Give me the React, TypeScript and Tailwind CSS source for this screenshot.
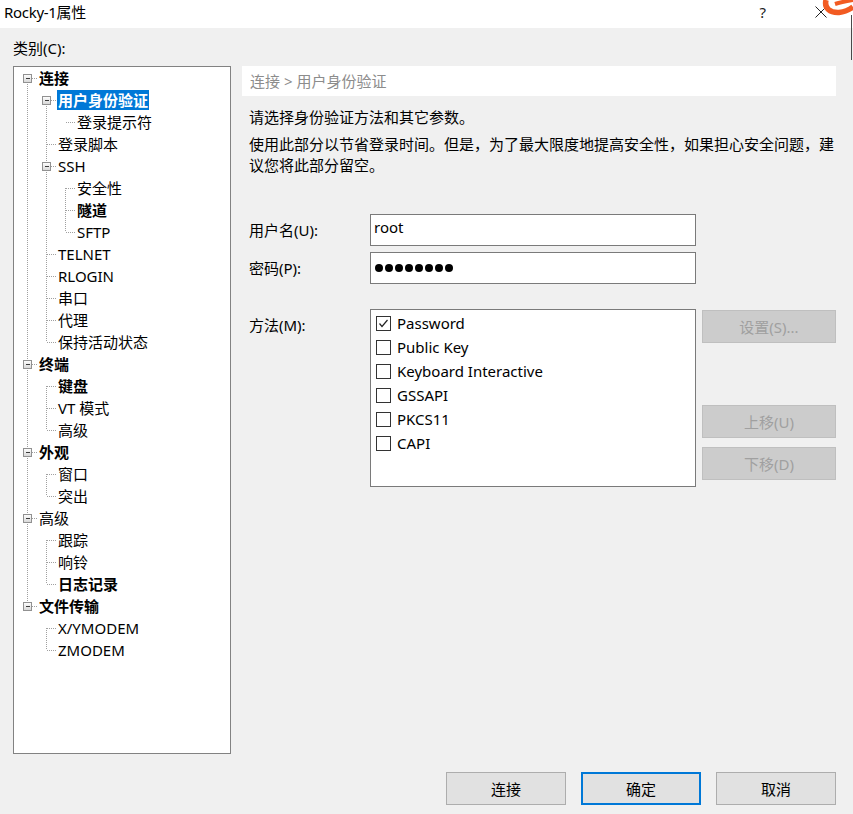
import React from "react";

type Node = { label: string; level: number; bold?: boolean; exp?: boolean; selected?: boolean };

const treeData: Node[] = [
  { label: "连接", level: 0, bold: true, exp: true },
  { label: "用户身份验证", level: 1, bold: true, exp: true, selected: true },
  { label: "登录提示符", level: 2 },
  { label: "登录脚本", level: 1 },
  { label: "SSH", level: 1, exp: true },
  { label: "安全性", level: 2 },
  { label: "隧道", level: 2, bold: true },
  { label: "SFTP", level: 2 },
  { label: "TELNET", level: 1 },
  { label: "RLOGIN", level: 1 },
  { label: "串口", level: 1 },
  { label: "代理", level: 1 },
  { label: "保持活动状态", level: 1 },
  { label: "终端", level: 0, bold: true, exp: true },
  { label: "键盘", level: 1, bold: true },
  { label: "VT 模式", level: 1 },
  { label: "高级", level: 1 },
  { label: "外观", level: 0, bold: true, exp: true },
  { label: "窗口", level: 1 },
  { label: "突出", level: 1 },
  { label: "高级", level: 0, exp: true },
  { label: "跟踪", level: 1 },
  { label: "响铃", level: 1 },
  { label: "日志记录", level: 1, bold: true },
  { label: "文件传输", level: 0, bold: true, exp: true },
  { label: "X/YMODEM", level: 1 },
  { label: "ZMODEM", level: 1 },
];

const indentClass: Record<number, string> = {
  0: "pl-[25px]",
  1: "pl-[44px]",
  2: "pl-[63px]",
};

const ROW = 22;

// dotted connector lines + expander boxes
function TreeLines() {
  const col = (l: number) => 13 + 19 * l;
  const lines: React.ReactNode[] = [];
  treeData.forEach((n, i) => {
    const cy = i * ROW + 11;
    const x = col(n.level);
    // vertical to next sibling
    for (let j = i + 1; j < treeData.length; j++) {
      if (treeData[j].level < n.level) break;
      if (treeData[j].level === n.level) {
        lines.push(
          <line key={"v" + i} x1={x + 0.5} y1={cy} x2={x + 0.5} y2={j * ROW + 11} stroke="#a0a0a0" strokeDasharray="1 1" />
        );
        break;
      }
    }
    lines.push(
      <line key={"h" + i} x1={n.exp ? x + 5 : x + 1} y1={cy + 0.5} x2={x + 10} y2={cy + 0.5} stroke="#a0a0a0" strokeDasharray="1 1" />
    );
    if (n.exp) {
      lines.push(
        <g key={"b" + i}>
          <rect x={x - 3.5} y={cy - 3.5} width={8} height={8} fill="url(#expg)" stroke="#919191" />
          <line x1={x - 1} y1={cy + 0.5} x2={x + 3} y2={cy + 0.5} stroke="#3c3c3c" />
        </g>
      );
    }
  });
  return (
    <svg className="absolute left-0 top-0 pointer-events-none" width={216} height={treeData.length * ROW}>
      <defs>
        <linearGradient id="expg" x1="0" y1="0" x2="0" y2="1">
          <stop offset="0" stopColor="#ffffff" />
          <stop offset="1" stopColor="#d6d6d6" />
        </linearGradient>
      </defs>
      {lines}
    </svg>
  );
}

function Checkbox({ checked }: { checked?: boolean }) {
  return (
    <div className="w-[15px] h-[15px] border border-[#333333] bg-white flex items-center justify-center">
      {checked && (
        <svg width="11" height="11" viewBox="0 0 11 11">
          <polyline points="1.5,5.5 4,8.5 9.5,2" fill="none" stroke="#222" strokeWidth="1.2" />
        </svg>
      )}
    </div>
  );
}

const methods = [
  { name: "Password", checked: true },
  { name: "Public Key" },
  { name: "Keyboard Interactive" },
  { name: "GSSAPI" },
  { name: "PKCS11" },
  { name: "CAPI" },
];

export default function App() {
  return (
    <div className="relative w-[853px] h-[814px] bg-[#f0f0f0] flex flex-col text-[15px] text-black font-['Noto_Sans','Noto_Sans_CJK_SC',sans-serif] overflow-hidden">
      {/* title bar */}
      <div className="h-[28px] bg-white flex items-center pl-[4px] pb-[5px]">
        <span className="leading-[20px] tracking-[-0.3px]">Rocky-1属性</span>
        <span className="ml-auto mr-[49px] leading-[20px] text-[#222]">?</span>
        <svg width="12" height="12" viewBox="0 0 12 12" className="mr-[26px]">
          <path d="M0.5 0.5 L11.5 11.5 M11.5 0.5 L0.5 11.5" stroke="#222" strokeWidth="1" />
        </svg>
      </div>
      {/* logo fragment in corner */}
      <svg className="absolute right-0 top-0" width="34" height="60" viewBox="0 0 34 60">
        <path d="M7 0 C5 8 11 13 20 12.5 C25 12 30 10 34 7" fill="none" stroke="#f25b22" strokeWidth="5.5" />
        <path d="M16 4 C22 2 28 1 34 0" fill="none" stroke="#f25b22" strokeWidth="4" />
        <line x1="32.5" y1="15" x2="32.5" y2="60" stroke="#4a4a4a" strokeWidth="1" />
      </svg>

      <div className="flex items-start pl-[13px]">
        <div className="flex flex-col pt-[10px] w-[218px]">
          <div className="leading-[20px]">类别(C):</div>
          <div className="mt-[8px] h-[688px] border border-[#828282] bg-white relative">
            <TreeLines />
            <div className="flex flex-col">
              {treeData.map((n, i) => (
                <div key={i} className={`h-[22px] flex items-center leading-[20px] ${indentClass[n.level]}`}>
                  {n.selected ? (
                    <span className="bg-[#0078d7] text-white font-bold px-[1px] -ml-[1px]">{n.label}</span>
                  ) : (
                    <span className={n.bold ? "font-bold" : ""}>{n.label}</span>
                  )}
                </div>
              ))}
            </div>
          </div>
        </div>

        <div className="ml-[11px] mt-[38px] w-[594px] flex flex-col">
          <div className="h-[30px] bg-white flex items-center pl-[8px] text-[#8c8c8c] leading-[20px]">
            连接 &gt; 用户身份验证
          </div>
          <div className="pl-[7px] mt-[11px] leading-[21px]">请选择身份验证方法和其它参数。</div>
          <div className="pl-[7px] mt-[6px] leading-[21px]">
            使用此部分以节省登录时间。但是，为了最大限度地提高安全性，如果担心安全问题，建议您将此部分留空。
          </div>

          <div className="pl-[7px] mt-[38px] flex flex-col gap-[6px]">
            <div className="flex items-center">
              <div className="w-[121px] leading-[20px]">用户名(U):</div>
              <div className="w-[326px] h-[32px] border border-[#7a7a7a] bg-white flex items-start pl-[3px] pt-[2px] leading-[20px]">
                root
              </div>
            </div>
            <div className="flex items-center">
              <div className="w-[121px] leading-[20px]">密码(P):</div>
              <div className="w-[326px] h-[32px] border border-[#7a7a7a] bg-white flex items-center pl-[4px] gap-[2px]">
                {Array.from({ length: 8 }).map((_, i) => (
                  <div key={i} className="w-[8px] h-[8px] rounded-full bg-black" />
                ))}
              </div>
            </div>
          </div>

          <div className="pl-[7px] mt-[25px] flex items-start">
            <div className="w-[121px] pt-[6px] leading-[20px]">方法(M):</div>
            <div className="w-[326px] h-[178px] border border-[#7a7a7a] bg-white flex flex-col pt-[1px] pl-[5px]">
              {methods.map((m) => (
                <div key={m.name} className="h-[24px] flex items-center gap-[6px] leading-[20px]">
                  <Checkbox checked={m.checked} />
                  <span>{m.name}</span>
                </div>
              ))}
            </div>
            <div className="ml-[6px] w-[134px] flex flex-col pt-[1px]">
              <button className="h-[33px] bg-[#cccccc] border border-[#bfbfbf] text-[#a0a0a0] leading-[20px]">设置(S)...</button>
              <button className="mt-[62px] h-[33px] bg-[#cccccc] border border-[#bfbfbf] text-[#a0a0a0] leading-[20px]">上移(U)</button>
              <button className="mt-[9px] h-[33px] bg-[#cccccc] border border-[#bfbfbf] text-[#a0a0a0] leading-[20px]">下移(D)</button>
            </div>
          </div>
        </div>
      </div>

      <div className="mt-[18px] flex justify-end gap-[15px] pr-[17px]">
        <button className="w-[120px] h-[33px] bg-[#e1e1e1] border border-[#adadad] leading-[20px]">连接</button>
        <button className="w-[120px] h-[33px] bg-[#e1e1e1] border-2 border-[#0078d7] leading-[20px]">确定</button>
        <button className="w-[120px] h-[33px] bg-[#e1e1e1] border border-[#adadad] leading-[20px]">取消</button>
      </div>
    </div>
  );
}
